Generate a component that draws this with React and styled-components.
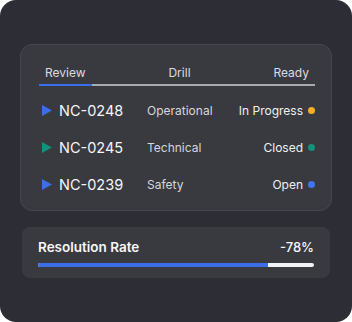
import React from 'react'
import styled, { createGlobalStyle } from 'styled-components'

const GlobalStyle = createGlobalStyle`
  html, body {
    margin: 0;
    padding: 0;
    background: #ffffff;
  }
  body {
    font-family: Inter, "Noto Sans", sans-serif;
    -webkit-font-smoothing: antialiased;
  }
  * { box-sizing: border-box; }
`

// 바깥 카드
const Card = styled.div`
  width: 352px;
  height: 322px;
  border-radius: 16px;
  background: #2d2d35;
  padding: 44px 20px 0;
`

const Panel = styled.section`
  background: #393940;
  border: 1px solid #46464e;
  border-radius: 12px;
  padding: 20px 16px 7px 18px;
`

const Tabs = styled.div`
  display: flex;
  justify-content: space-between;
  border-bottom: 2px solid #a9a9b0;
  margin-bottom: 6px;
`

const Tab = styled.div`
  padding: 0 6px 3px;
  margin-bottom: -2px;
  font-size: 12px;
  line-height: 16px;
  color: #dcdce0;
  border-bottom: 2px solid ${props => (props.active ? '#3b6ee8' : 'transparent')};
`

const Row = styled.div`
  display: flex;
  align-items: center;
  height: 37px;
  padding-left: 3px;
`

const Ident = styled.div`
  display: flex;
  align-items: center;
  gap: 7px;
  width: 105px;
  font-size: 14.5px;
  font-weight: 400;
  color: #f6f6f8;
`

const Category = styled.div`
  flex: 1;
  font-size: 12px;
  color: #d6d6db;
`

const Status = styled.div`
  display: flex;
  align-items: center;
  gap: 5px;
  font-size: 12px;
  font-weight: 400;
  color: #f0f0f2;
`

const Dot = styled.span`
  width: 7px;
  height: 7px;
  border-radius: 50%;
  background: ${props => props.color};
`

const RatePanel = styled.section`
  margin: 16px 2px 0;
  background: #393940;
  border-radius: 8px;
  padding: 11px 16px 11px;
`

const RateHead = styled.div`
  display: flex;
  justify-content: space-between;
  align-items: center;
  font-size: 13.5px;
  line-height: 18px;
  color: #f6f6f8;
  margin-bottom: 7px;
`

const RateLabel = styled.span`
  font-weight: 600;
`

const RateValue = styled.span`
  font-size: 13px;
  font-weight: 500;
`

const Track = styled.div`
  height: 4px;
  border-radius: 2px;
  background: #f2f2f4;
  overflow: hidden;
`

const Fill = styled.div`
  height: 100%;
  background: #3b6ee8;
`

const Arrow = ({ color }) => (
  <svg width="10" height="11" viewBox="0 0 10 11">
    <polygon points="0,0 10,5.5 0,11" fill={color} />
  </svg>
)

const rows = [
  { id: 'NC-0248', cat: 'Operational', status: 'In Progress', arrow: '#3b6ee8', dot: '#f5b01e' },
  { id: 'NC-0245', cat: 'Technical', status: 'Closed', arrow: '#14917a', dot: '#14917a' },
  { id: 'NC-0239', cat: 'Safety', status: 'Open', arrow: '#3b6ee8', dot: '#3f74f0' },
]

export default function App() {
  return (
    <>
      <GlobalStyle />
      <Card>
        <Panel>
          <Tabs>
            <Tab active>Review</Tab>
            <Tab>Drill</Tab>
            <Tab>Ready</Tab>
          </Tabs>
          {rows.map(r => (
            <Row key={r.id}>
              <Ident>
                <Arrow color={r.arrow} />
                {r.id}
              </Ident>
              <Category>{r.cat}</Category>
              <Status>
                {r.status}
                <Dot color={r.dot} />
              </Status>
            </Row>
          ))}
        </Panel>
        <RatePanel>
          <RateHead>
            <RateLabel>Resolution Rate</RateLabel>
            <RateValue>-78%</RateValue>
          </RateHead>
          <Track>
            <Fill style={{ width: '83.3%' }} />
          </Track>
        </RatePanel>
      </Card>
    </>
  )
}
